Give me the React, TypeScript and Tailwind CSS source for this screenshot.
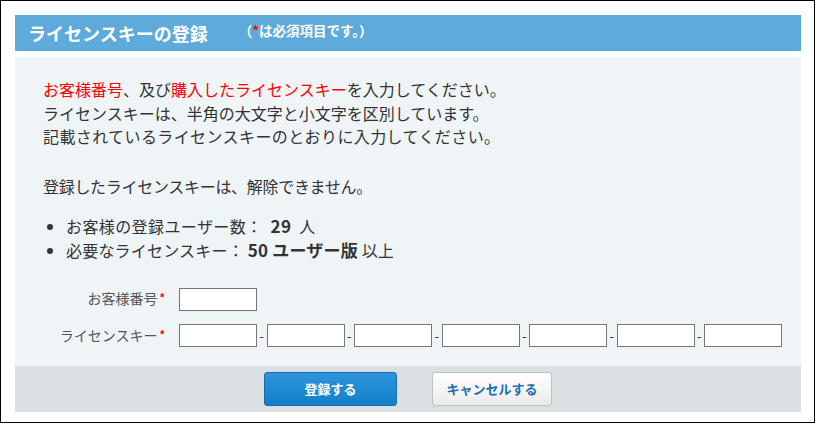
import React from "react";

const font = "font-['Noto_Sans_CJK_JP','Noto_Sans',sans-serif]";

function Req() {
  return <span className="relative -top-[2px] ml-[2px] text-[11px] font-bold text-[#ff0000]">*</span>;
}

function KeyInput() {
  return (
    <input
      type="text"
      className="h-[23px] w-[78px] border border-[#767676] bg-white px-1 text-[13px] outline-none"
    />
  );
}

export default function App() {
  const keyParts = [0, 1, 2, 3, 4, 5, 6];

  return (
    <div className={`${font} h-[423px] w-[815px] border border-black bg-white px-[14px] pt-[14px] text-[#333]`}>
      <div className="flex h-[36px] w-[786px] items-center bg-[#5eaadb] pl-[13px]">
        <h1 className="text-[18px] font-bold text-white">ライセンスキーの登録</h1>
        <span className="mb-[5px] ml-[31px] text-[13.5px] font-bold text-white">
          （<span className="text-[#ff0000]">*</span>は必須項目です。）
        </span>
      </div>

      <div className="mt-[6px] w-[786px] bg-[#eff4f7] pb-[19px] pt-[21px]">
        <div className="pl-[28px] text-[16px] leading-[23.5px]">
          <p>
            <span className="text-[#ff0000]">お客様番号</span>、及び
            <span className="text-[#ff0000]">購入したライセンスキー</span>を入力してください。
            <br />
            ライセンスキーは、半角の大文字と小文字を区別しています。
            <br />
            <span className="tracking-[0.4px]">記載されているライセンスキーのとおりに入力してください。</span>
          </p>
          <p className="mt-[26.5px] tracking-[-0.3px]">登録したライセンスキーは、解除できません。</p>
          <ul className="mt-[15.5px] list-disc pl-[23px] leading-[24px] tracking-[0.4px]">
            <li>
              お客様の登録ユーザー数：&nbsp; <b className="text-[17px]">29</b>&nbsp; 人
            </li>
            <li className="tracking-[0.2px]">
              必要なライセンスキー： <b className="text-[17px]">50 ユーザー版</b> 以上
            </li>
          </ul>
        </div>

        <div className="mt-[24px] flex flex-col gap-[13px]">
          <div className="flex items-center">
            <label className="w-[150px] text-right text-[14px] text-[#555]">
              お客様番号
              <Req />
            </label>
            <div className="ml-[14px]">
              <KeyInput />
            </div>
          </div>
          <div className="flex items-center">
            <label className="w-[150px] text-right text-[14px] text-[#555]">
              ライセンスキー
              <Req />
            </label>
            <div className="ml-[14px] flex items-center">
              {keyParts.map((i) => (
                <React.Fragment key={i}>
                  {i > 0 ? <span className="w-[9.5px] text-center text-[13px] text-[#333]">-</span> : null}
                  <KeyInput />
                </React.Fragment>
              ))}
            </div>
          </div>
        </div>
      </div>

      <div className="flex h-[46px] w-[786px] items-center justify-center gap-[35px] bg-[#dadfe2]">
        <button
          type="button"
          className="h-[34px] w-[133px] rounded-[3px] border border-[#1a6dab] bg-gradient-to-b from-[#2c95db] to-[#137fca] text-[13px] font-bold text-white"
        >
          登録する
        </button>
        <button
          type="button"
          className="h-[34px] w-[120px] rounded-[3px] border border-[#b9c3c8] bg-gradient-to-b from-white to-[#ebebeb] text-[13px] font-bold text-[#1d6eae]"
        >
          キャンセルする
        </button>
      </div>
    </div>
  );
}
